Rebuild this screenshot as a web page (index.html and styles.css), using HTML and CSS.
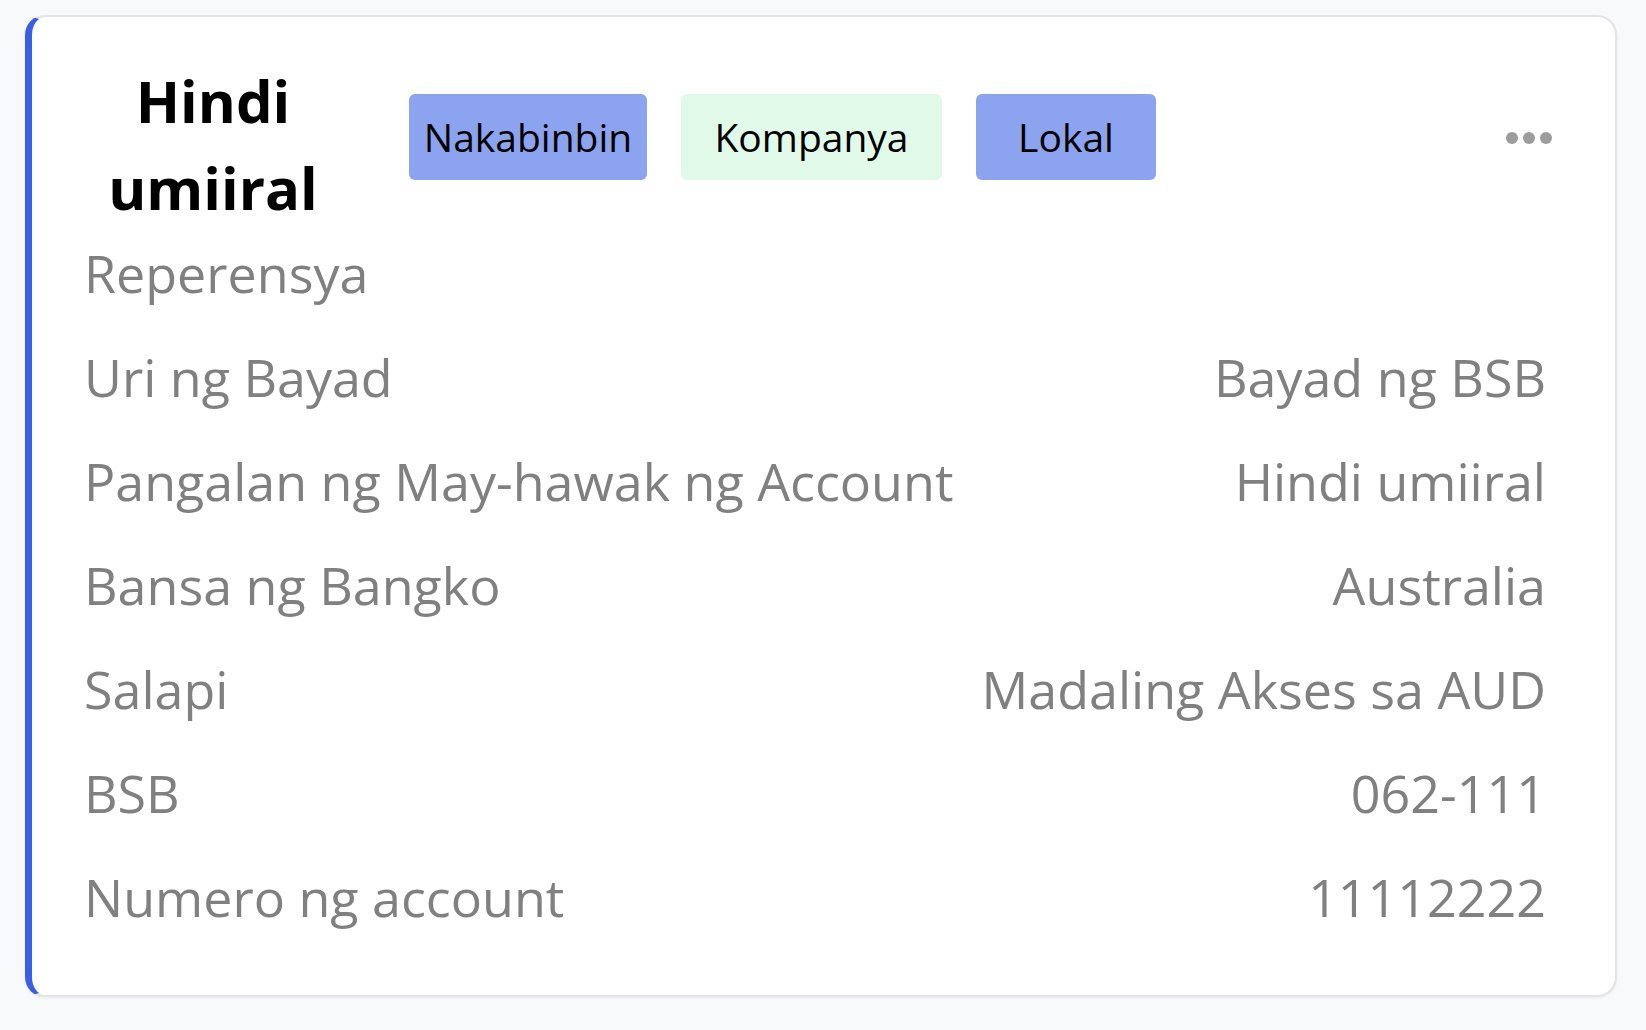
FILE: index.html
```html
<!DOCTYPE html>
<html lang="tl">
<head>
<meta charset="utf-8">
<title>Account</title>
<link rel="stylesheet" href="styles.css">
</head>
<body>
<div class="card">
  <div class="card-head">
    <div class="title">Hindi umiiral</div>
    <div class="badges">
      <span class="badge badge--blue badge--w1">Nakabinbin</span>
      <span class="badge badge--green badge--w2">Kompanya</span>
      <span class="badge badge--blue badge--w3">Lokal</span>
    </div>
    <div class="more" aria-label="Higit pa"><i></i><i></i><i></i></div>
  </div>
  <dl class="rows">
    <div class="row"><dt>Reperensya</dt><dd></dd></div>
    <div class="row"><dt>Uri ng Bayad</dt><dd>Bayad ng BSB</dd></div>
    <div class="row"><dt>Pangalan ng May-hawak ng Account</dt><dd>Hindi umiiral</dd></div>
    <div class="row"><dt>Bansa ng Bangko</dt><dd>Australia</dd></div>
    <div class="row"><dt>Salapi</dt><dd>Madaling Akses sa AUD</dd></div>
    <div class="row"><dt>BSB</dt><dd>062-111</dd></div>
    <div class="row"><dt>Numero ng account</dt><dd>11112222</dd></div>
  </dl>
</div>
</body>
</html>
```
FILE: styles.css
```css
html, body {
  margin: 0;
  padding: 0;
  background: #f8f9fb;
}
body {
  font-family: "Open Sans", "Noto Sans", sans-serif;
  padding: 15px 29px 33px 25px;
}
.card {
  background: #ffffff;
  border: 2px solid #e4e4e6;
  border-left: 7px solid #3a5fe6;
  border-radius: 20px;
  box-shadow: 0 1px 3px rgba(0, 0, 0, 0.06);
  padding: 40px 69px 46px 52px;
}
.card-head {
  display: flex;
  align-items: flex-start;
  margin-bottom: -10px;
}
.title {
  width: 258px;
  margin-right: 67px;
  text-align: center;
  font-weight: 700;
  font-size: 58px;
  line-height: 87px;
  color: #000;
}
.badges {
  display: flex;
  gap: 34px;
  margin-top: 37px;
}
.badge {
  display: block;
  height: 86px;
  line-height: 86px;
  border-radius: 6px;
  font-size: 39px;
  color: #000;
  text-align: center;
}
.badge--blue { background: #8ca4ef; }
.badge--green { background: #e1f9e8; }
.badge--w1 { width: 238px; }
.badge--w2 { width: 261px; }
.badge--w3 { width: 180px; }
.more {
  margin-left: auto;
  margin-right: -6px;
  margin-top: 75px;
  display: flex;
  gap: 5px;
}
.more i {
  display: block;
  width: 12px;
  height: 12px;
  border-radius: 50%;
  background: #9c9c9c;
}
.rows {
  margin: 0;
  padding: 0;
}
.row {
  display: flex;
  justify-content: space-between;
  height: 104px;
  line-height: 104px;
  font-size: 52px;
  color: #808080;
}
.row dt, .row dd {
  margin: 0;
  white-space: nowrap;
}
```
